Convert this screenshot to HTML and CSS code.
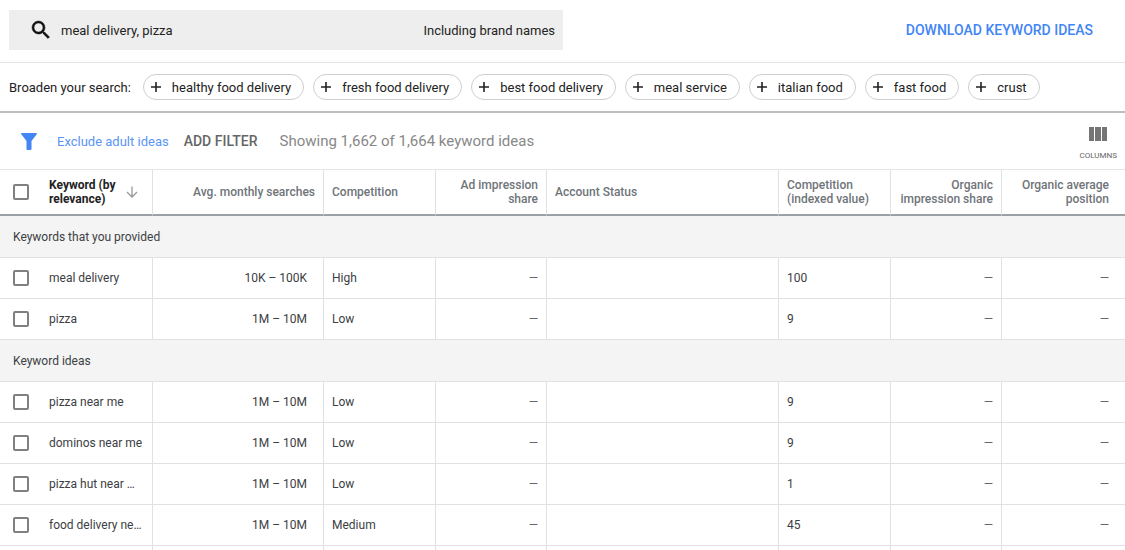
FILE: index.html
```html
<!DOCTYPE html>
<html lang="en">
<head>
<meta charset="utf-8">
<title>Keyword ideas</title>
<link rel="stylesheet" href="styles.css">
</head>
<body>
<header class="topbar">
  <form class="search">
    <svg class="search-icon" viewBox="0 0 24 24" aria-hidden="true"><path d="M15.5 14h-.79l-.28-.27A6.47 6.47 0 0 0 16 9.5 6.5 6.5 0 1 0 9.5 16c1.61 0 3.09-.59 4.23-1.57l.27.28v.79l5 4.99L20.49 19l-4.99-5zm-6 0C7.01 14 5 11.99 5 9.5S7.01 5 9.5 5 14 7.01 14 9.5 11.99 14 9.5 14z"/></svg>
    <input class="search-input" type="text" aria-label="Search keywords" value="meal delivery, pizza">
    <span class="brand-note">Including brand names</span>
  </form>
  <button class="download" type="button">DOWNLOAD KEYWORD IDEAS</button>
</header>

<section class="broaden">
  <span class="broaden-label">Broaden your search:</span>
  <button class="chip" type="button"><svg class="plus" viewBox="0 0 12 12" aria-hidden="true"><path d="M6 1v10M1 6h10"/></svg>healthy food delivery</button>
  <button class="chip" type="button"><svg class="plus" viewBox="0 0 12 12" aria-hidden="true"><path d="M6 1v10M1 6h10"/></svg>fresh food delivery</button>
  <button class="chip" type="button"><svg class="plus" viewBox="0 0 12 12" aria-hidden="true"><path d="M6 1v10M1 6h10"/></svg>best food delivery</button>
  <button class="chip" type="button"><svg class="plus" viewBox="0 0 12 12" aria-hidden="true"><path d="M6 1v10M1 6h10"/></svg>meal service</button>
  <button class="chip" type="button"><svg class="plus" viewBox="0 0 12 12" aria-hidden="true"><path d="M6 1v10M1 6h10"/></svg>italian food</button>
  <button class="chip" type="button"><svg class="plus" viewBox="0 0 12 12" aria-hidden="true"><path d="M6 1v10M1 6h10"/></svg>fast food</button>
  <button class="chip" type="button"><svg class="plus" viewBox="0 0 12 12" aria-hidden="true"><path d="M6 1v10M1 6h10"/></svg>crust</button>
</section>

<section class="toolbar">
  <svg class="funnel" viewBox="0 0 16 17" aria-hidden="true"><path d="M.6 0h14.8q1 .3.3 1.2L10.500 8v8q0 1-1 1h-3q-1 0-1-1V8L.3 1.200Q-.4.3.6 0z"/></svg>
  <a class="exclude" href="#">Exclude adult ideas</a>
  <button class="add-filter" type="button">ADD FILTER</button>
  <span class="showing">Showing 1,662 of 1,664 keyword ideas</span>
  <button class="columns" type="button">
    <svg class="columns-icon" viewBox="0 0 18 14" aria-hidden="true"><path d="M0 0h5v14H0zM6 0h6v14H6zM13 0h5v14h-5z"/></svg>
    COLUMNS
  </button>
</section>

<table class="keywords">
  <colgroup>
    <col class="c-check"><col class="c-keyword"><col class="c-searches"><col class="c-regular"><col class="c-narrow"><col><col class="c-regular"><col class="c-narrow"><col class="c-last">
  </colgroup>
  <thead>
    <tr>
      <th class="check"><input type="checkbox" aria-label="Select all keywords"></th>
      <th class="keyword sorted"><div class="sort"><span>Keyword (by relevance)</span><svg class="arrow" viewBox="0 0 12 12" aria-hidden="true"><path d="M6 0.500v10.500M1 6l5 5 5-5"/></svg></div></th>
      <th class="num">Avg. monthly searches</th>
      <th>Competition</th>
      <th class="num">Ad impression share</th>
      <th>Account Status</th>
      <th>Competition (indexed value)</th>
      <th class="num">Organic impression share</th>
      <th class="num end">Organic average position</th>
    </tr>
  </thead>
  <tbody>
    <tr class="group"><td colspan="9">Keywords that you provided</td></tr>
    <tr><td class="check"><input type="checkbox" id="k1"></td><td class="keyword"><label for="k1">meal delivery</label></td><td class="num range">10K – 100K</td><td>High</td><td class="num dash">—</td><td></td><td>100</td><td class="num dash">—</td><td class="num dash end">—</td></tr>
    <tr><td class="check"><input type="checkbox" id="k2"></td><td class="keyword"><label for="k2">pizza</label></td><td class="num range">1M – 10M</td><td>Low</td><td class="num dash">—</td><td></td><td>9</td><td class="num dash">—</td><td class="num dash end">—</td></tr>
  </tbody>
  <tbody>
    <tr class="group"><td colspan="9">Keyword ideas</td></tr>
    <tr><td class="check"><input type="checkbox" id="k3"></td><td class="keyword"><label for="k3">pizza near me</label></td><td class="num range">1M – 10M</td><td>Low</td><td class="num dash">—</td><td></td><td>9</td><td class="num dash">—</td><td class="num dash end">—</td></tr>
    <tr><td class="check"><input type="checkbox" id="k4"></td><td class="keyword"><label for="k4">dominos near me</label></td><td class="num range">1M – 10M</td><td>Low</td><td class="num dash">—</td><td></td><td>9</td><td class="num dash">—</td><td class="num dash end">—</td></tr>
    <tr><td class="check"><input type="checkbox" id="k5"></td><td class="keyword"><label for="k5">pizza hut near …</label></td><td class="num range">1M – 10M</td><td>Low</td><td class="num dash">—</td><td></td><td>1</td><td class="num dash">—</td><td class="num dash end">—</td></tr>
    <tr><td class="check"><input type="checkbox" id="k6"></td><td class="keyword"><label for="k6">food delivery ne…</label></td><td class="num range">1M – 10M</td><td>Medium</td><td class="num dash">—</td><td></td><td>45</td><td class="num dash">—</td><td class="num dash end">—</td></tr>
    <tr class="tail"><td class="check"></td><td></td><td></td><td></td><td></td><td></td><td></td><td></td><td class="end"></td></tr>
  </tbody>
</table>
</body>
</html>
```
FILE: styles.css
```css
* { box-sizing: border-box; }

body {
  margin: 0;
  background: #fff;
  color: #3c4043;
  font-family: Roboto, "Liberation Sans", sans-serif;
  font-size: 12px;
}

button, input { font: inherit; color: inherit; margin: 0; }
button { border: 0; padding: 0; background: none; cursor: pointer; white-space: nowrap; }

.topbar {
  display: flex;
  align-items: center;
  justify-content: space-between;
  padding: 10px 32px 12px 9px;
  border-bottom: 1px solid #e4e4e4;
  color: #222;
}

.search {
  display: flex;
  align-items: center;
  flex: 0 1 554px;
  height: 40px;
  padding: 0 8px 0 20px;
  background: #eee;
  font-size: 13px;
}

.search-icon { width: 24px; height: 24px; fill: #111; stroke: #111; stroke-width: 0.5; }

.search-input {
  flex: 1;
  min-width: 0;
  padding: 0 8px;
  border: 0;
  outline: 0;
  background: none;
}

.brand-note { white-space: nowrap; }

.download { color: #4285f4; font-size: 14px; font-weight: 500; }

.broaden {
  display: flex;
  align-items: center;
  gap: 9px;
  height: 50px;
  padding: 0 9px;
  border-bottom: 2px solid #bdbdbd;
  color: #222;
  font-size: 13px;
}

.broaden-label { margin-right: 3px; white-space: nowrap; }

.chip {
  display: flex;
  align-items: center;
  gap: 10px;
  height: 26px;
  padding: 0 12px 0 6px;
  border: 1px solid #cfcfcf;
  border-radius: 13px;
}

.plus { width: 12px; height: 12px; fill: none; stroke: #222; stroke-width: 1.600; }

.toolbar {
  display: flex;
  align-items: center;
  height: 57px;
  padding: 0 8px 0 21px;
  border-bottom: 1px solid #e4e4e4;
}

.funnel { width: 16px; height: 17px; margin-right: 20px; fill: #4285f4; }
.exclude { margin-right: 15px; color: #5a95f5; font-size: 13px; text-decoration: none; white-space: nowrap; }
.add-filter { margin-right: 22px; color: #666; font-size: 14px; font-weight: 500; }
.showing { color: #888; font-size: 15px; white-space: nowrap; }

.columns {
  display: flex;
  flex-direction: column;
  align-items: center;
  gap: 10px;
  margin-left: auto;
  padding-top: 4px;
  color: #666;
  font-size: 8px;
}

.columns-icon { width: 18px; height: 14px; fill: #757575; }

.keywords {
  width: 100%;
  table-layout: fixed;
  border-collapse: separate;
  border-spacing: 0;
}

.c-check { width: 49px; }
.c-keyword { width: 104px; }
.c-searches { width: 171px; }
.c-regular { width: 112px; }
.c-narrow { width: 111px; }
.c-last { width: 123px; }

th, td {
  padding: 0 8px;
  border-right: 1px solid #dfe1e5;
  text-align: left;
  vertical-align: middle;
}

th {
  height: 46px;
  border-bottom: 2px solid #9aa0a6;
  color: #6f7479;
  font-weight: 500;
  line-height: 14px;
}

td { height: 41px; border-bottom: 1px solid #dfe1e5; }

.check { padding: 0 0 0 13px; border-right: 0; }
.keyword { padding-left: 0; white-space: nowrap; }
.num { text-align: right; }
.range { padding-right: 16px; }
.end { padding-right: 16px; border-right: 0; }
.dash { color: #666; }
.sorted { color: #222; font-weight: 700; white-space: normal; }

.sort { display: flex; align-items: center; justify-content: space-between; padding-right: 6px; }
.arrow { flex: none; width: 12px; height: 12px; fill: none; stroke: #999; stroke-width: 1.300; }

.group td {
  height: 42px;
  padding: 0 13px;
  border-right: 0;
  background: #f4f4f4;
}

.tail td { height: 4px; border-bottom: 0; }

input[type="checkbox"] {
  appearance: none;
  display: block;
  width: 16px;
  height: 16px;
  border: 2px solid #808080;
  border-radius: 2px;
  background: #fff;
}

input[type="checkbox"]:checked { background: #4285f4; border-color: #4285f4; }
```
